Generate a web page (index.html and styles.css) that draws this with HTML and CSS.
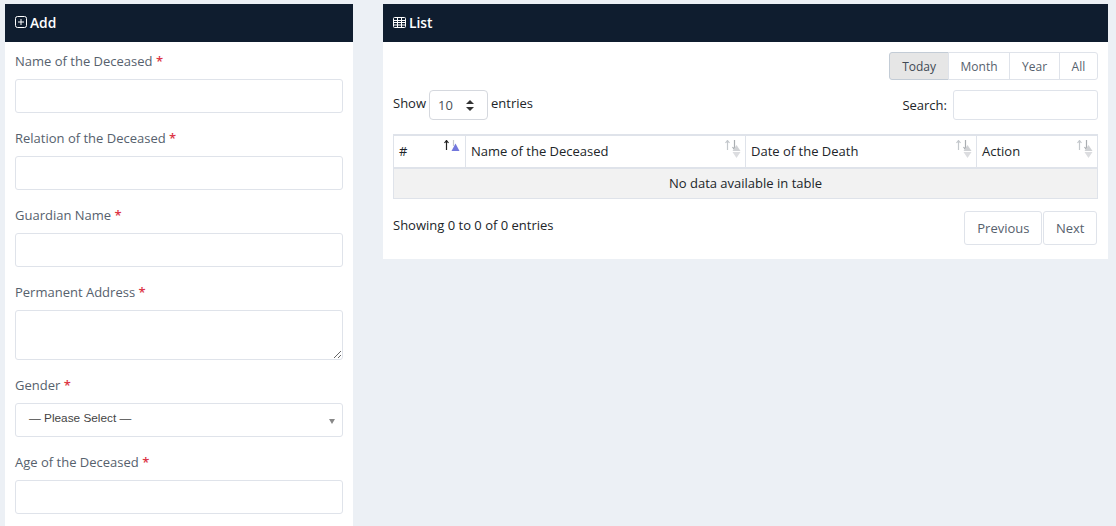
FILE: index.html
```html
<!DOCTYPE html>
<html lang="en">
<head>
    <meta charset="UTF-8">
    <meta name="viewport" content="width=device-width, initial-scale=1.0">
    <title>Deceased Register</title>
    <link rel="stylesheet" href="styles.css">
</head>
<body>
    <div class="page">

        <section class="card card-add">
            <h2 class="card-title">
                <svg class="title-icon" viewBox="0 0 12 12"><rect x="0.5" y="0.5" width="11" height="11" rx="2"/><path d="M3 6h6M6 3v6"/></svg>
                Add
            </h2>
            <form class="card-body">
                <div class="field">
                    <label class="field-label">Name of the Deceased <span class="req">*</span></label>
                    <input type="text" class="field-input">
                </div>
                <div class="field">
                    <label class="field-label">Relation of the Deceased <span class="req">*</span></label>
                    <input type="text" class="field-input">
                </div>
                <div class="field">
                    <label class="field-label">Guardian Name <span class="req">*</span></label>
                    <input type="text" class="field-input">
                </div>
                <div class="field">
                    <label class="field-label">Permanent Address <span class="req">*</span></label>
                    <textarea class="field-input field-textarea"></textarea>
                </div>
                <div class="field">
                    <label class="field-label">Gender <span class="req">*</span></label>
                    <div class="fake-select">
                        <span>— Please Select —</span>
                        <span class="fake-caret"></span>
                    </div>
                </div>
                <div class="field">
                    <label class="field-label">Age of the Deceased <span class="req">*</span></label>
                    <input type="text" class="field-input">
                </div>
            </form>
        </section>

        <section class="card card-list">
            <h2 class="card-title">
                <svg class="title-icon title-icon-table" viewBox="0 0 13 11"><rect x="0.5" y="0.5" width="12" height="10" rx="1"/><path d="M0.5 3.5h12M0.5 5.5h12M0.5 8h12M4.5 0.5v10M8.5 0.5v10"/></svg>
                List
            </h2>
            <div class="card-body">
                <div class="range-row">
                    <div class="btn-group">
                        <button type="button" class="range-btn active">Today</button>
                        <button type="button" class="range-btn">Month</button>
                        <button type="button" class="range-btn">Year</button>
                        <button type="button" class="range-btn">All</button>
                    </div>
                </div>

                <div class="tools-row">
                    <div class="tools-left">
                        Show
                        <div class="length-select">
                            <span>10</span>
                            <svg class="length-caret" viewBox="0 0 8 11"><path d="M4 0l4 4H0zM4 11L0 7h8z"/></svg>
                        </div>
                        entries
                    </div>
                    <div class="tools-right">
                        Search:
                        <input type="text" class="search-input">
                    </div>
                </div>

                <table class="data-table">
                    <colgroup>
                        <col class="col-num">
                        <col class="col-name">
                        <col class="col-date">
                        <col class="col-action">
                    </colgroup>
                    <thead>
                        <tr>
                            <th>#<svg class="sort sort-on" viewBox="0 0 16 18"><path class="sort-up" d="M2.5 10V1M0.5 3l2-2.5 2 2.5"/><path class="sort-down" d="M9.5 0v6"/><path class="sort-tri-up" d="M11.5 3.5l4 7.5h-8z"/></svg></th>
                            <th>Name of the Deceased<svg class="sort" viewBox="0 0 16 18"><path class="sort-up" d="M2.5 10V1M0.5 3l2-2.5 2 2.5"/><path class="sort-down" d="M9.5 0v9.5M7.5 7l2 2.5 2-2.5"/><path class="sort-tri-up" d="M11.5 5l4 6h-8z"/><path class="sort-tri" d="M7.5 12h8l-4 6z"/></svg></th>
                            <th>Date of the Death<svg class="sort" viewBox="0 0 16 18"><path class="sort-up" d="M2.5 10V1M0.5 3l2-2.5 2 2.5"/><path class="sort-down" d="M9.5 0v9.5M7.5 7l2 2.5 2-2.5"/><path class="sort-tri-up" d="M11.5 5l4 6h-8z"/><path class="sort-tri" d="M7.5 12h8l-4 6z"/></svg></th>
                            <th>Action<svg class="sort" viewBox="0 0 16 18"><path class="sort-up" d="M2.5 10V1M0.5 3l2-2.5 2 2.5"/><path class="sort-down" d="M9.5 0v9.5M7.5 7l2 2.5 2-2.5"/><path class="sort-tri-up" d="M11.5 5l4 6h-8z"/><path class="sort-tri" d="M7.5 12h8l-4 6z"/></svg></th>
                        </tr>
                    </thead>
                    <tbody>
                        <tr>
                            <td colspan="4" class="empty-row">No data available in table</td>
                        </tr>
                    </tbody>
                </table>

                <div class="table-foot">
                    <div class="table-info">Showing 0 to 0 of 0 entries</div>
                    <div class="pager">
                        <button type="button" class="page-btn">Previous</button>
                        <button type="button" class="page-btn">Next</button>
                    </div>
                </div>
            </div>
        </section>

    </div>
</body>
</html>
```

FILE: styles.css
```css
* {
    box-sizing: border-box;
}

html,
body {
    height: 526px;
    overflow: hidden;
}

body {
    margin: 0;
    background-color: #ecf0f5;
    color: #212529;
    font-family: "Open Sans", "Liberation Sans", sans-serif;
    font-size: 13px;
}

.page {
    display: flex;
    align-items: flex-start;
    gap: 30px;
    padding: 4px 8px 0 5px;
}

.card {
    background-color: #fff;
}

.card-add {
    width: 348px;
    flex: none;
}

.card-list {
    width: 725px;
    flex: none;
}

.card-title {
    display: flex;
    align-items: center;
    gap: 3px;
    height: 38px;
    margin: 0;
    padding: 0 10px 2px;
    background-color: #0f1d2f;
    color: #fff;
    font-size: 13.8px;
    font-weight: 600;
}

.title-icon {
    width: 12px;
    height: 12px;
    fill: none;
    stroke: #fff;
    stroke-width: 1;
}

.title-icon-table {
    width: 13px;
    height: 11px;
}

.card-body {
    display: block;
    padding: 10px;
}

/* form */
.field {
    margin-bottom: 16px;
}

.field-label {
    display: block;
    height: 18px;
    margin-bottom: 9px;
    color: #56616d;
    line-height: 18px;
}

.req {
    color: #dc3545;
    font-weight: 600;
}

.field-input {
    display: block;
    width: 328px;
    height: 34px;
    background-color: #fff;
    border: 1px solid #dfe3ea;
    border-radius: 3px;
}

.field-textarea {
    height: 50px;
    resize: vertical;
}

.fake-select {
    display: flex;
    align-items: center;
    justify-content: space-between;
    height: 34px;
    padding: 0 7px 4px 13px;
    border: 1px solid #dfe3ea;
    border-radius: 3px;
    color: #444;
    font-family: "Liberation Sans", Arial, sans-serif;
    font-size: 11.8px;
}

.fake-caret {
    margin-top: 7px;
    border-top: 5px solid #888;
    border-left: 3px solid transparent;
    border-right: 3px solid transparent;
}

/* list */
.range-row {
    display: flex;
    justify-content: flex-end;
    margin-bottom: 10px;
}

.btn-group {
    display: flex;
}

.range-btn {
    height: 28px;
    margin-left: -1px;
    padding: 0 11.75px;
    background-color: #fff;
    border: 1px solid #dfe3ea;
    color: #56616d;
    font-family: inherit;
    font-size: 12px;
}

.range-btn:first-child {
    border-radius: 3px 0 0 3px;
}

.range-btn:last-child {
    border-radius: 0 3px 3px 0;
}

.range-btn.active {
    background-color: #e6e6e6;
    border-color: #c3ccd6;
    color: #3f4954;
}

.tools-row {
    display: flex;
    align-items: center;
    justify-content: space-between;
    height: 30px;
    margin-bottom: 14px;
}

.tools-left,
.tools-right {
    display: flex;
    align-items: center;
    gap: 6px;
}

.tools-left {
    margin-top: -4px;
}

.length-select {
    display: flex;
    align-items: center;
    justify-content: space-between;
    width: 59px;
    height: 30px;
    margin: 4px -3px 0 -3px;
    padding: 0 13px 0 8px;
    border: 1px solid #d5d8de;
    border-radius: 4px;
    color: #495057;
}

.length-caret {
    width: 8px;
    height: 11px;
    fill: #333;
}

.search-input {
    width: 145px;
    height: 30px;
    background-color: #fff;
    border: 1px solid #dfe3ea;
    border-radius: 3px;
}

.data-table {
    width: 705px;
    border-collapse: collapse;
    table-layout: fixed;
    border: 1px solid #dfe3ea;
}

.col-num {
    width: 72px;
}

.col-name {
    width: 280px;
}

.col-date {
    width: 231px;
}

.data-table th {
    position: relative;
    height: 33px;
    padding: 0 5px 2px;
    border-top: 2px solid #dfe3ea;
    border-bottom: 2px solid #dfe3ea;
    border-left: 1px solid #dfe3ea;
    text-align: left;
    font-weight: 400;
    color: #212529;
}

.sort {
    position: absolute;
    top: 4px;
    right: 4px;
    width: 16px;
    height: 18px;
    fill: none;
}

.sort-on {
    right: 5px;
}

.sort-up,
.sort-down {
    stroke: #c4c8cc;
    stroke-width: 1.2;
}

.sort-down {
    stroke: #a9adb1;
}

.sort-tri-up {
    fill: #d0d2d5;
}

.sort-tri {
    fill: #dcdde0;
}

.sort-on .sort-up {
    stroke: #222;
}

.sort-on .sort-down {
    stroke: #c4c8cc;
}

.sort-on .sort-tri-up {
    fill: #7277dc;
}

.empty-row {
    height: 30px;
    background-color: #f2f2f2;
    text-align: center;
}

.table-foot {
    display: flex;
    justify-content: space-between;
    padding: 12px 1px 4px 0;
}

.table-info {
    padding-top: 5px;
}

.pager {
    display: flex;
    gap: 1px;
}

.page-btn {
    height: 34px;
    padding: 0 12px;
    background-color: #fff;
    border: 1px solid #dfe3ea;
    border-radius: 3px;
    color: #56616d;
    font-family: inherit;
    font-size: 13px;
}

.page-btn:last-child {
    padding: 0 11.5px;
}
```
